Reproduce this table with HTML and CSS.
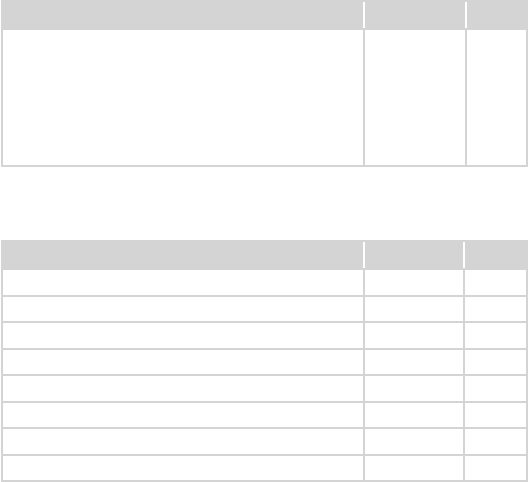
FILE: index.html
```html
<!DOCTYPE html>
<html>
<head>
<meta charset="utf-8">
<link rel="stylesheet" href="styles.css">
</head>
<body>
<div class="page">
  <div class="grid-table t1">
    <div class="head"><div class="hc"></div><div class="hc"></div><div class="hc"></div></div>
    <div class="body">
      <div class="row tall"><div class="c"></div><div class="c"></div><div class="c"></div></div>
    </div>
  </div>
  <div class="grid-table t2">
    <div class="head"><div class="hc"></div><div class="hc"></div><div class="hc"></div></div>
    <div class="body">
      <div class="row"><div class="c"></div><div class="c"></div><div class="c"></div></div>
      <div class="row"><div class="c"></div><div class="c"></div><div class="c"></div></div>
      <div class="row"><div class="c"></div><div class="c"></div><div class="c"></div></div>
      <div class="row"><div class="c"></div><div class="c"></div><div class="c"></div></div>
      <div class="row"><div class="c"></div><div class="c"></div><div class="c"></div></div>
      <div class="row"><div class="c"></div><div class="c"></div><div class="c"></div></div>
      <div class="row"><div class="c"></div><div class="c"></div><div class="c"></div></div>
      <div class="row"><div class="c"></div><div class="c"></div><div class="c"></div></div>
    </div>
  </div>
</div>
</body>
</html>
```
FILE: styles.css
```css
html, body {
  margin: 0;
  padding: 0;
  background: #ffffff;
  font-family: "Liberation Sans", Arial, sans-serif;
}
.page {
  padding-left: 1px;
  width: 527px;
  display: flex;
  flex-direction: column;
  gap: 73px;
}
.grid-table {
  --g: #d4d4d4;
  display: flex;
  flex-direction: column;
}
.head {
  display: grid;
  grid-template-columns: var(--h1) var(--h2) var(--h3);
  background: var(--g);
  height: 30px;
  box-sizing: border-box;
  padding: 2px 0 2.5px;
}
.hc + .hc {
  border-left: 2px solid #ffffff;
}
.row {
  display: grid;
  grid-template-columns: var(--b1) var(--b2) var(--b3);
  height: 26.5px;
  box-sizing: border-box;
  border-bottom: 2px solid var(--g);
}
.row.tall {
  height: 137px;
}
.c {
  border-right: 2px solid var(--g);
}
.c:first-child {
  border-left: 2px solid var(--g);
}
.t1 {
  --h1: 362px; --h2: 102px; --h3: 63px;
  --b1: 364px; --b2: 102px; --b3: 61px;
}
.t2 {
  --h1: 362px; --h2: 100px; --h3: 65px;
  --b1: 364px; --b2: 100px; --b3: 63px;
}
```
